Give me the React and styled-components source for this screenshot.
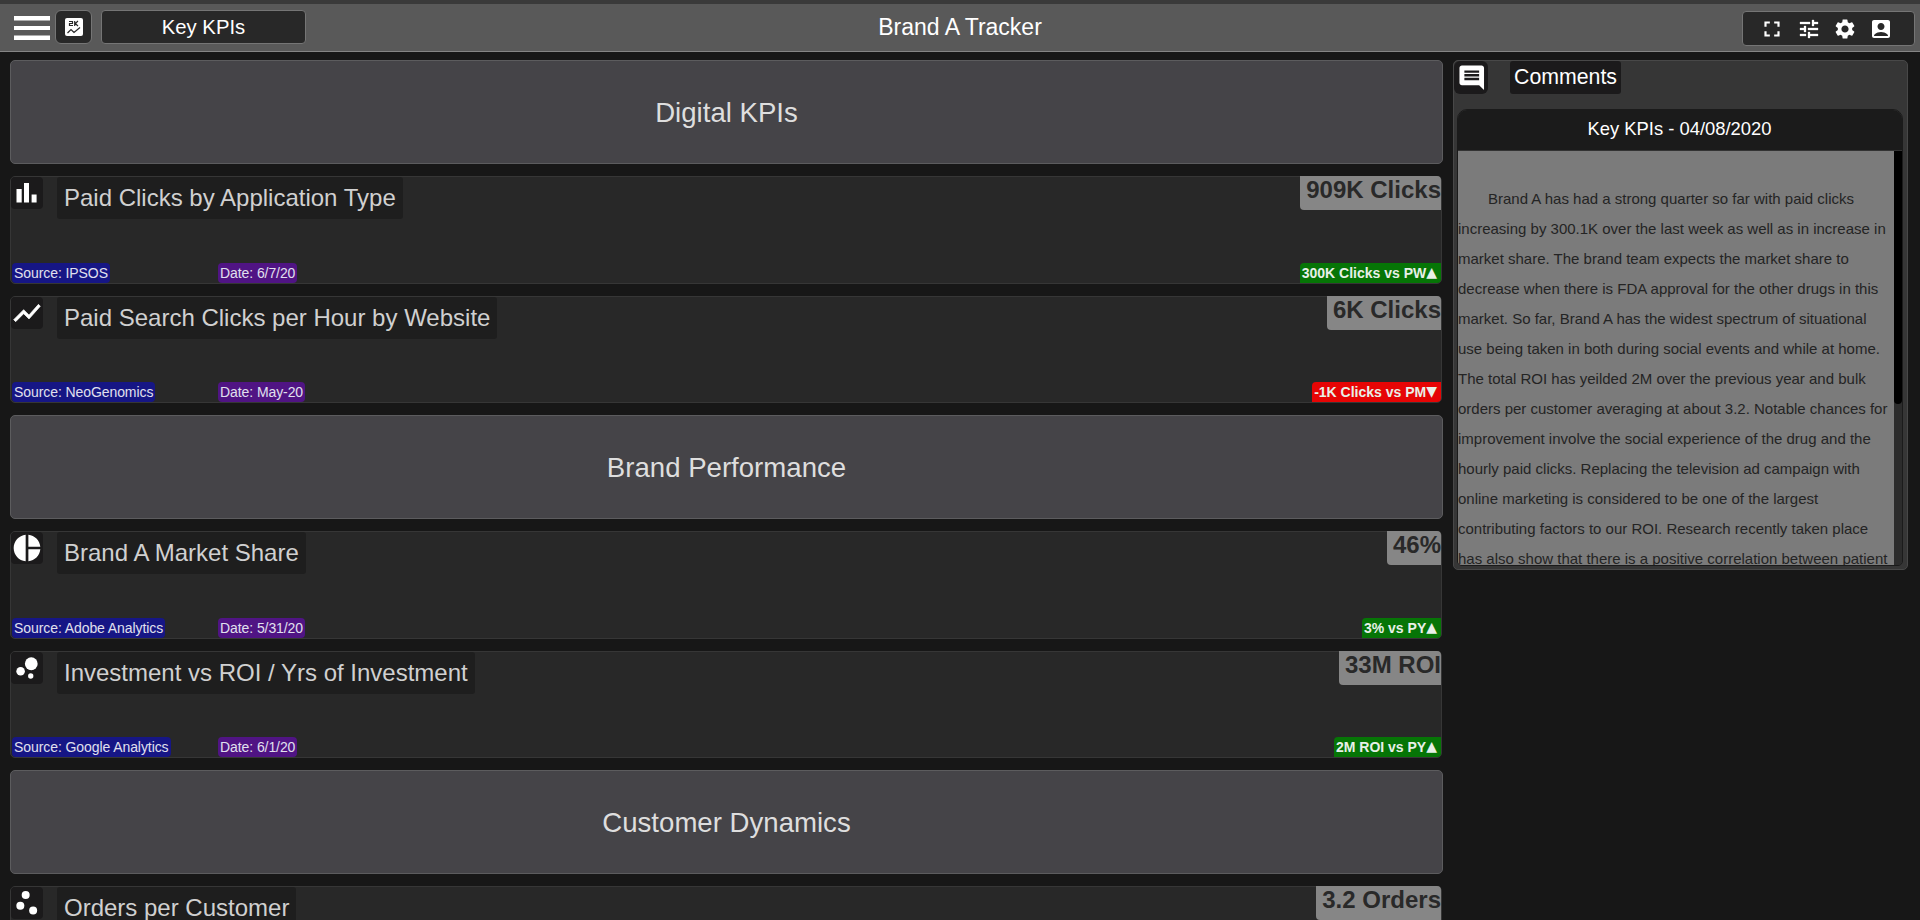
import React from "react";
import styled, { createGlobalStyle } from "styled-components";
import {
  MdAccountBox,
  MdBubbleChart,
  MdComment,
  MdFullscreen,
  MdPieChart,
  MdScatterPlot,
  MdSettings,
  MdShowChart,
  MdTune,
} from "react-icons/md";

const GlobalStyle = createGlobalStyle`
  * { box-sizing: border-box; }
  html, body { margin: 0; height: 100%; overflow: hidden; background: #171717; }
  body { font-family: "Liberation Sans", Arial, sans-serif; color: #fff; }
  svg { display: block; flex: none; }
`;

const Page = styled.div`
  height: 920px;
  overflow: hidden;
  display: flex;
  flex-direction: column;
`;

const Header = styled.header`
  flex: none;
  height: 52px;
  display: grid;
  grid-template-columns: 1fr auto 1fr;
  background: #595959;
  border-top: 4px solid #3a3a3a;
  border-bottom: 1px solid #858585;
`;

const HeaderLeft = styled.div`
  display: flex;
  padding: 6px 0 0 14px;
`;

const MenuIcon = styled.svg`
  width: 36px;
  height: 24px;
  margin: 6px 5px 0 0;
`;

const Box = styled.div`
  display: flex;
  align-items: center;
  justify-content: center;
  background: #282828;
  border: 1px solid #757575;
  border-radius: ${(p) => p.$radius}px;
`;

const LogoButton = styled(Box)`
  width: 37px;
  height: 34px;
  padding-bottom: 1px;
`;

const PageName = styled(Box)`
  width: 205px;
  height: 34px;
  margin-left: 9px;
  font-size: 20.3px;
`;

const AppTitle = styled.h1`
  margin: 10px 0 0;
  font-size: 23px;
  font-weight: 400;
  line-height: 26px;
`;

const HeaderRight = styled.div`
  display: flex;
  justify-content: flex-end;
  padding: 7px 5px 0 0;
`;

const Tools = styled(Box)`
  width: 173px;
  height: 35px;
  gap: 12.3px;
  padding-right: 5px;
`;

const Main = styled.main`
  flex: 1;
  min-height: 0;
  display: flex;
  align-items: flex-start;
  gap: 10px;
  padding: 8px 12px 0 10px;
`;

const Board = styled.section`
  width: 1433px;
  display: flex;
  flex-direction: column;
  gap: 12px;
`;

const SectionCard = styled.div`
  height: 104px;
  display: flex;
  align-items: center;
  justify-content: center;
  padding-top: 1px;
  background: #454448;
  border: 1px solid #5c5c5e;
  border-radius: 5px;
  color: #dedede;
  font-size: 27.6px;
`;

const Kpi = styled.article`
  width: 1432px;
  height: 107.6px;
  display: flex;
  justify-content: space-between;
  background: #282828;
  border: 1px solid #363636;
  border-radius: 5px;
`;

const KpiSide = styled.div`
  display: flex;
  flex-direction: column;
  justify-content: space-between;
  align-items: ${(p) => (p.$end ? "flex-end" : "flex-start")};
`;

const KpiHead = styled.div`
  display: flex;
  gap: 14px;
`;

const IconTile = styled.div`
  width: 32px;
  height: 32px;
  background: #1b1a1b;
  border-radius: 4px;
`;

const TrendIcon = styled(MdShowChart)`
  stroke-width: 0.5px;

  path[fill="none"] {
    stroke: none;
  }
`;

const SlidersIcon = styled(MdTune)`
  stroke-width: 0.3px;

  path[fill="none"] {
    stroke: none;
  }
`;

const KpiTitle = styled.h3`
  margin: 0;
  height: 42px;
  padding: 0 7px;
  background: #1e1e1e;
  border-radius: 3px;
  color: #d0d0d0;
  font-size: 24px;
  font-weight: 400;
  line-height: 41px;
  white-space: nowrap;
`;

const KpiMeta = styled.div`
  display: grid;
  grid-template-columns: 206px auto;
  padding-left: 1px;
`;

const Chip = styled.span`
  justify-self: start;
  height: 20px;
  padding: 0 2px;
  border-radius: 4px;
  background: ${(p) => p.$color};
  color: #e0e0ee;
  font-size: 14px;
  letter-spacing: -0.08px;
  line-height: 20px;
  white-space: nowrap;
`;

const KpiValue = styled.div`
  height: 34px;
  margin-top: -1px;
  padding-left: 6px;
  background: #868686;
  border-radius: 0 4px 0 4px;
  color: #292929;
  font-size: 24px;
  font-weight: 700;
  line-height: 28px;
`;

const Delta = styled(Chip)`
  display: flex;
  padding: 0 4px 0 2px;
  border-radius: 4px 0 4px 0;
  color: #e8f0e8;
  font-weight: 700;
  letter-spacing: 0;
`;

const Arrow = styled.span`
  font-family: "DejaVu Sans", sans-serif;
  font-weight: 400;
  line-height: 18px;
`;

const Comments = styled.aside`
  width: 455px;
  height: 510px;
  display: flex;
  flex-direction: column;
  gap: 15px;
  padding: 0 4px 3px 0;
  background: #363636;
  border: 1px solid #484848;
  border-radius: 5px;
`;

const CommentsHead = styled.div`
  display: flex;
  gap: 22px;
`;

const CommentTile = styled(IconTile)`
  width: 34px;
  height: 33px;
  padding: 1.5px 0 0 2.6px;
  border-radius: 6px;
`;

const CommentsTitle = styled.h2`
  margin: 0;
  height: 33px;
  padding: 0 4px;
  background: #1b1a1b;
  border-radius: 3px;
  font-size: 21.3px;
  font-weight: 400;
  line-height: 33px;
`;

const Note = styled.div`
  flex: 1;
  min-height: 0;
  margin-left: 3px;
  display: flex;
  flex-direction: column;
  border: 1px solid #1b1b1b;
  border-radius: 10px 10px 5px 5px;
  overflow: hidden;
`;

const NoteTitle = styled.div`
  flex: none;
  height: 41px;
  padding-right: 1px;
  background: #1b1b1b;
  border-bottom: 1px solid #333;
  font-size: 18.4px;
  line-height: 37px;
  text-align: center;
`;

const NoteBody = styled.div`
  flex: 1;
  min-height: 0;
  display: flex;
`;

const NoteText = styled.p`
  flex: 1;
  margin: 0;
  padding-top: 33px;
  background: #7b7b7b;
  color: #242424;
  font-size: 15px;
  line-height: 30px;
  text-indent: 30px;
  overflow: hidden;
`;

const Track = styled.div`
  width: 8px;
  background: #2c2c2c;
`;

const Thumb = styled.div`
  height: 253px;
  background: #000;
  border-radius: 0 0 4px 4px;
`;

const BarsIcon = () => (
  <svg width="32" height="32" viewBox="0 0 32 32" fill="#fff">
    <path d="M5.5 12h5.2v13.6H5.5zM13 6h5v19.6h-5zM20.6 17.4h5v8.2h-5z" />
  </svg>
);

const LogoIcon = () => (
  <svg width="18" height="18" viewBox="0 0 18 18">
    <rect width="18" height="18" rx="2" fill="#fff" />
    <path
      d="M4 3.5h3.5v2H4.5v2H8M9.7 3v5M13 3l-2.7 2.5L13 8M2.5 15l3.5-3.5 3 3L15 9.5"
      fill="none"
      stroke="#282828"
      strokeWidth="1.2"
    />
  </svg>
);

const rows = [
  { section: "Digital KPIs" },
  { icon: BarsIcon, title: "Paid Clicks by Application Type", source: "IPSOS", date: "6/7/20", value: "909K Clicks", delta: "300K Clicks vs PW", up: true },
  { icon: TrendIcon, title: "Paid Search Clicks per Hour by Website", source: "NeoGenomics", date: "May-20", value: "6K Clicks", delta: "-1K Clicks vs PM", up: false },
  { section: "Brand Performance" },
  { icon: MdPieChart, title: "Brand A Market Share", source: "Adobe Analytics", date: "5/31/20", value: "46%", delta: "3% vs PY", up: true },
  { icon: MdBubbleChart, title: "Investment vs ROI / Yrs of Investment", source: "Google Analytics", date: "6/1/20", value: "33M ROI", delta: "2M ROI vs PY", up: true },
  { section: "Customer Dynamics" },
  { icon: MdScatterPlot, title: "Orders per Customer", value: "3.2 Orders" },
];

const KpiRow = ({ icon: Icon, title, source, date, value, delta, up }) => (
  <Kpi>
    <KpiSide>
      <KpiHead>
        <IconTile><Icon size={32} /></IconTile>
        <KpiTitle>{title}</KpiTitle>
      </KpiHead>
      {source && (
        <KpiMeta>
          <Chip $color="#161685">Source: {source}</Chip>
          <Chip $color="#501484">Date: {date}</Chip>
        </KpiMeta>
      )}
    </KpiSide>
    <KpiSide $end>
      <KpiValue>{value}</KpiValue>
      {delta && (
        <Delta $color={up ? "#067506" : "#e60505"}>
          {delta}
          <Arrow>{up ? "▲" : "▼"}</Arrow>
        </Delta>
      )}
    </KpiSide>
  </Kpi>
);

export default function App() {
  return (
    <Page>
      <GlobalStyle />
      <Header>
        <HeaderLeft>
          <MenuIcon viewBox="0 0 36 24" fill="#fff">
            <path d="M0 0h36v4.5H0zM0 10h36v4H0zM0 19.5h36v4.5H0z" />
          </MenuIcon>
          <LogoButton $radius={6}><LogoIcon /></LogoButton>
          <PageName $radius={4}>Key KPIs</PageName>
        </HeaderLeft>
        <AppTitle>Brand A Tracker</AppTitle>
        <HeaderRight>
          <Tools $radius={4}>
            <MdFullscreen size={26} />
            <SlidersIcon size={24} />
            <MdSettings size={24} />
            <MdAccountBox size={24} />
          </Tools>
        </HeaderRight>
      </Header>
      <Main>
        <Board>
          {rows.map((row) =>
            row.section ? (
              <SectionCard key={row.section}>{row.section}</SectionCard>
            ) : (
              <KpiRow key={row.title} {...row} />
            )
          )}
        </Board>
        <Comments>
          <CommentsHead>
            <CommentTile><MdComment size={29.5} /></CommentTile>
            <CommentsTitle>Comments</CommentsTitle>
          </CommentsHead>
          <Note>
            <NoteTitle>Key KPIs - 04/08/2020</NoteTitle>
            <NoteBody>
              <NoteText>
                Brand A has had a strong quarter so far with paid clicks increasing by 300.1K over
                the last week as well as in increase in market share. The brand team expects the
                market share to decrease when there is FDA approval for the other drugs in this
                market. So far, Brand A has the widest spectrum of situational use being taken in
                both during social events and while at home. The total ROI has yeilded 2M over the
                previous year and bulk orders per customer averaging at about 3.2. Notable chances
                for improvement involve the social experience of the drug and the hourly paid
                clicks. Replacing the television ad campaign with online marketing is considered to
                be one of the largest contributing factors to our ROI. Research recently taken place
                has also show that there is a positive correlation between patient
              </NoteText>
              <Track><Thumb /></Track>
            </NoteBody>
          </Note>
        </Comments>
      </Main>
    </Page>
  );
}
